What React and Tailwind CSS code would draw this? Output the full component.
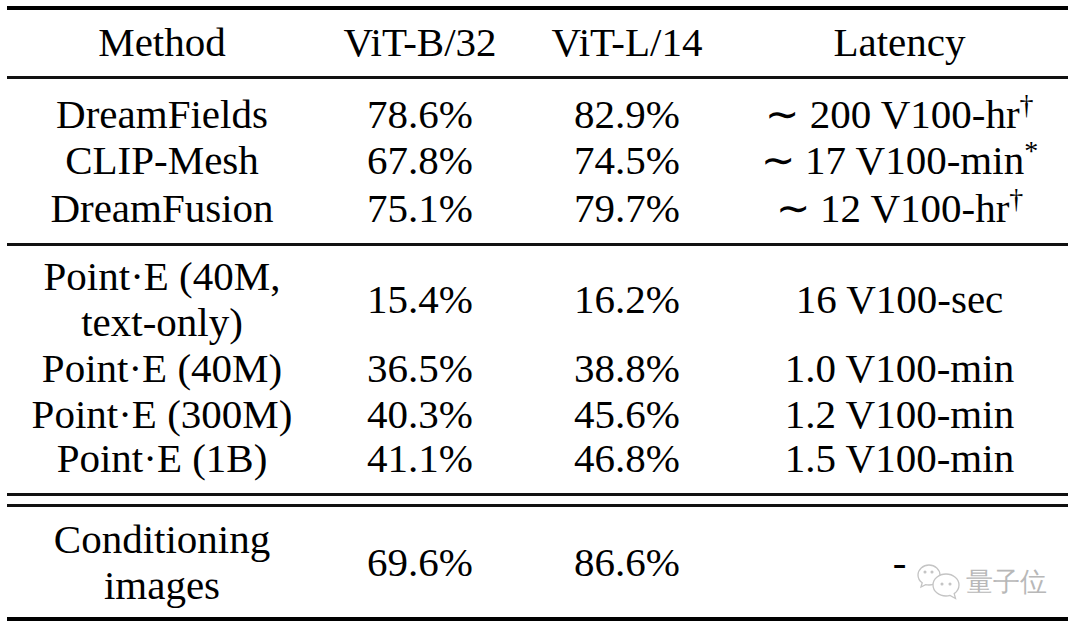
import React from 'react';

const cols = 'grid grid-cols-[310px_206px_208px_337px] items-center text-center';

const top = [
  ['DreamFields', '78.6%', '82.9%', <>∼ 200 V100-hr<sup className="text-[28px]">†</sup></>],
  ['CLIP-Mesh', '67.8%', '74.5%', <>∼ 17 V100-min<sup className="text-[28px]">*</sup></>],
  ['DreamFusion', '75.1%', '79.7%', <>∼ 12 V100-hr<sup className="text-[28px]">†</sup></>],
];

const pointE = [
  [<>Point·E (40M,<br />text-only)</>, '15.4%', '16.2%', '16 V100-sec'],
  ['Point·E (40M)', '36.5%', '38.8%', '1.0 V100-min'],
  ['Point·E (300M)', '40.3%', '45.6%', '1.2 V100-min'],
  ['Point·E (1B)', '41.1%', '46.8%', '1.5 V100-min'],
];

const Rows = ({ data }) =>
  data.map((row, r) =>
    row.map((cell, c) => (
      <div key={`${r}-${c}`} className="whitespace-nowrap">
        {cell}
      </div>
    ))
  );

// wechat style double bubble, light grey outline
const BubbleMark = () => (
  <svg width="48" height="42" viewBox="0 0 48 42" fill="none" stroke="#c4c4c4" strokeWidth="1.3">
    <path d="M13 3 C6.9 3 2 7.5 2 13 C2 16.2 3.6 19 6.2 20.8 L5 25 L9.6 22.6 C10.7 22.9 11.8 23 13 23 C19.1 23 24 18.5 24 13 C24 7.5 19.1 3 13 3 Z" fill="#fff" />
    <circle cx="9" cy="10" r="0.9" fill="#c4c4c4" />
    <circle cx="16" cy="10" r="0.9" fill="#c4c4c4" />
    <path d="M30 12 C22.8 12 17 16.9 17 23 C17 29.1 22.8 34 30 34 C31.4 34 32.7 33.8 34 33.4 L39.5 36.5 L38.2 31.6 C41.1 29.6 43 26.5 43 23 C43 16.9 37.2 12 30 12 Z" fill="#fff" />
    <circle cx="26" cy="22" r="0.9" fill="#c4c4c4" />
    <circle cx="34" cy="22" r="0.9" fill="#c4c4c4" />
  </svg>
);

export default function App() {
  return (
    <div className="relative w-[1080px] h-[631px] bg-white pt-[6px] pl-[7px] font-serif text-[41px] leading-[46px] text-black">
      <div className="w-[1061px] font-[Liberation_Serif,serif]">
        <div className="h-[4px] bg-black" />

        <div className={`${cols} pt-[9px] pb-[11px]`}>
          <div>Method</div>
          <div>ViT-B/32</div>
          <div>ViT-L/14</div>
          <div>Latency</div>
        </div>
        <div className="h-[3px] bg-[#111]" />

        <div className={`${cols} grid-rows-[46px_46px_50px] pt-[12px] pb-[10px]`}>
          <Rows data={top} />
        </div>
        <div className="h-[3px] bg-[#111]" />

        <div className={`${cols} grid-rows-[92px_46px_45px_44px] pt-[7px] pb-[13px]`}>
          <Rows data={pointE} />
        </div>
        <div className="h-[3px] bg-[#111]" />
        <div className="h-[8px]" />
        <div className="h-[3px] bg-[#111]" />

        <div className={`${cols} pt-[9px] pb-[9px]`}>
          <div>Conditioning<br />images</div>
          <div>69.6%</div>
          <div>86.6%</div>
          <div>-</div>
        </div>
        <div className="h-[4px] bg-black" />
      </div>

      <div className="absolute left-[916px] top-[562px] flex items-start gap-[2px]">
        <BubbleMark />
        <span className="mt-[5px] font-sans text-[27px] leading-none text-[#b8b8b8] font-light">
          量子位
        </span>
      </div>
    </div>
  );
}
